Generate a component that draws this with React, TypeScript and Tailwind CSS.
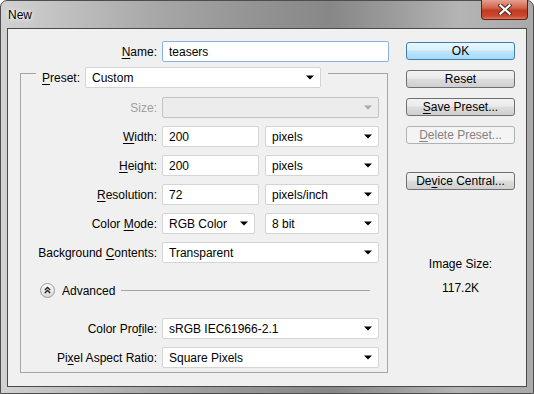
import type { ReactNode } from "react";

const font = { fontFamily: '"Liberation Sans", Arial, sans-serif' };

function Mn({ text, at }: { text: string; at: number }) {
  return (
    <>
      {text.slice(0, at)}
      <span className="underline underline-offset-[2px] decoration-[1px]">{text[at]}</span>
      {text.slice(at + 1)}
    </>
  );
}

function Caret({ dim }: { dim?: boolean }) {
  return (
    <svg width="8" height="5" viewBox="0 0 8 5" className="shrink-0">
      <path d="M0 0.5 H8 L4 4.5 Z" fill={dim ? "#a8a8a8" : "#000"} />
    </svg>
  );
}

function Select({ w, value, disabled }: { w: string; value?: string; disabled?: boolean }) {
  return (
    <div
      className={`${w} flex h-[21px] items-center justify-between rounded-[2px] border pl-[6px] pr-[6px] ${
        disabled ? "border-[#c2c2c2] bg-[#ececec]" : "border-[#d4d4d4] bg-white"
      }`}
    >
      <span className="text-[12px] leading-none text-black">{value}</span>
      <Caret dim={disabled} />
    </div>
  );
}

function Field({ w, value, focused }: { w: string; value: string; focused?: boolean }) {
  return (
    <div
      className={`${w} flex h-[21px] items-center rounded-[2px] border pl-[6px] text-[12px] leading-none text-black ${
        focused ? "border-[#86b4df] bg-white" : "border-[#d4d4d4] bg-white"
      }`}
    >
      {value}
    </div>
  );
}

function Row({ label, dim, children }: { label: ReactNode; dim?: boolean; children: ReactNode }) {
  return (
    <div className="flex h-[21px] items-center">
      <div className={`w-[136px] text-right text-[12px] ${dim ? "text-[#a0a0a0]" : "text-black"}`}>{label}</div>
      <div className="ml-[5px] flex items-center">{children}</div>
    </div>
  );
}

function Btn({ children, primary, disabled, className = "" }: { children: ReactNode; primary?: boolean; disabled?: boolean; className?: string }) {
  const skin = primary
    ? "border-[#3c7fb1] bg-[linear-gradient(#eaf6fd,#d9f0fc_45%,#bee6fd_50%,#a7d9f5)] text-black"
    : disabled
      ? "border-[#adb2b5] bg-[#f4f4f4] text-[#838383]"
      : "border-[#707070] bg-[linear-gradient(#f2f2f2,#ebebeb_45%,#dddddd_50%,#cfcfcf)] text-black";
  return (
    <div className={`flex h-[18px] w-[109px] items-center justify-center rounded-[3px] border text-[12px] leading-none ${skin} ${className}`}>
      {children}
    </div>
  );
}

function AdvancedIcon() {
  return (
    <svg width="15" height="15" viewBox="0 0 15 15" className="shrink-0">
      <defs>
        <linearGradient id="adv" x1="0" y1="0" x2="0" y2="1">
          <stop offset="0" stopColor="#ffffff" />
          <stop offset="1" stopColor="#d6d6d6" />
        </linearGradient>
      </defs>
      <circle cx="7.5" cy="7.5" r="7" fill="url(#adv)" stroke="#9a9a9a" />
      <path d="M4.8 7 L7.5 4.5 L10.2 7 M4.8 10 L7.5 7.5 L10.2 10" fill="none" stroke="#222" strokeWidth="1.3" />
    </svg>
  );
}

export default function App() {
  return (
    <div style={font} className="h-[394px] w-[534px] overflow-hidden bg-white">
      <div className="flex h-[394px] w-[534px] flex-col rounded-t-[7px] border border-[#4d4d4d] bg-[linear-gradient(90deg,#d2d2d2,#c0c0c0_12%,#a6a6a6_30%,#939393_48%,#878787_62%,#9c9c9c_74%,#b4b4b4_86%,#a9a9a9)] px-[6px] pb-[6px]">
        <div className="flex h-[27px] items-start justify-between">
          <div className="pl-[1px] pt-[8px] text-[12px] leading-none text-black [text-shadow:0_0_6px_#fff,0_0_3px_#fff]">New</div>
          <div className="mr-[-1px] mt-[-1px] flex h-[20px] w-[47px] items-center justify-center rounded-b-[4px] border border-t-0 border-[#5c2218] bg-[linear-gradient(#e6a090,#d0674f_40%,#c13a21_55%,#c9492f_85%,#e07a5e)]">
            <svg width="14" height="11" viewBox="0 0 14 11">
              <path d="M2.5 1.5 L11.5 9.5 M11.5 1.5 L2.5 9.5" stroke="#4a2a24" strokeWidth="4.2" strokeLinecap="square" />
              <path d="M2.5 1.5 L11.5 9.5 M11.5 1.5 L2.5 9.5" stroke="#ffffff" strokeWidth="2.3" strokeLinecap="square" />
            </svg>
          </div>
        </div>
        <div className="flex flex-1 border border-[#4a4a4a] bg-[#f0f0f0]">
          <div className="w-[382px] pt-[12px]">
            <div className="flex h-[21px] items-center">
              <div className="w-[149px] text-right text-[12px] text-black">
                <Mn text="Name:" at={0} />
              </div>
              <div className="ml-[5px]">
                <Field w="w-[227px]" value="teasers" focused />
              </div>
            </div>

            <div className="ml-[12px] mt-[11px] h-[300px] w-[368px] border border-[#a5a5a5]">
              <div className="-mt-[7px] ml-[15px] flex w-fit items-center gap-[5px] bg-[#f0f0f0] px-[6px] pr-[7px]">
                <div className="text-[12px] text-black">
                  <Mn text="Preset:" at={0} />
                </div>
                <Select w="w-[236px]" value="Custom" />
              </div>

              <div className="mt-[9px] flex flex-col gap-[8px]">
                <Row label="Size:" dim>
                  <Select w="w-[217px]" disabled />
                </Row>
                <Row label={<Mn text="Width:" at={0} />}>
                  <Field w="w-[97px]" value="200" />
                  <div className="ml-[6px]">
                    <Select w="w-[114px]" value="pixels" />
                  </div>
                </Row>
                <Row label={<Mn text="Height:" at={0} />}>
                  <Field w="w-[97px]" value="200" />
                  <div className="ml-[6px]">
                    <Select w="w-[114px]" value="pixels" />
                  </div>
                </Row>
                <Row label={<Mn text="Resolution:" at={0} />}>
                  <Field w="w-[97px]" value="72" />
                  <div className="ml-[6px]">
                    <Select w="w-[114px]" value="pixels/inch" />
                  </div>
                </Row>
                <Row label={<Mn text="Color Mode:" at={6} />}>
                  <Select w="w-[93px]" value="RGB Color" />
                  <div className="ml-[10px]">
                    <Select w="w-[114px]" value="8 bit" />
                  </div>
                </Row>
                <Row label={<Mn text="Background Contents:" at={11} />}>
                  <Select w="w-[217px]" value="Transparent" />
                </Row>
              </div>

              <div className="ml-[19px] mt-[20px] flex h-[15px] items-center">
                <AdvancedIcon />
                <span className="ml-[7px] text-[12px] text-black">Advanced</span>
                <div className="ml-[6px] mr-[17px] h-px flex-1 bg-[#a5a5a5]" />
              </div>

              <div className="mt-[20px] flex flex-col gap-[8px]">
                <Row label={<Mn text="Color Profile:" at={9} />}>
                  <Select w="w-[217px]" value="sRGB IEC61966-2.1" />
                </Row>
                <Row label={<Mn text="Pixel Aspect Ratio:" at={2} />}>
                  <Select w="w-[217px]" value="Square Pixels" />
                </Row>
              </div>
            </div>
          </div>

          <div className="ml-[16px] flex w-[109px] flex-col pt-[13px]">
            <Btn primary>OK</Btn>
            <Btn className="mt-[10px]">Reset</Btn>
            <Btn className="mt-[10px]">
              <Mn text="Save Preset..." at={0} />
            </Btn>
            <Btn className="mt-[10px]" disabled>
              <Mn text="Delete Preset..." at={0} />
            </Btn>
            <Btn className="mt-[28px]">
              <Mn text="Device Central..." at={2} />
            </Btn>
            <div className="mt-[67px] text-center text-[12px] leading-[14px] text-black">Image Size:</div>
            <div className="mt-[10px] text-center text-[12px] leading-[14px] text-black">117.2K</div>
          </div>
        </div>
      </div>
    </div>
  );
}
